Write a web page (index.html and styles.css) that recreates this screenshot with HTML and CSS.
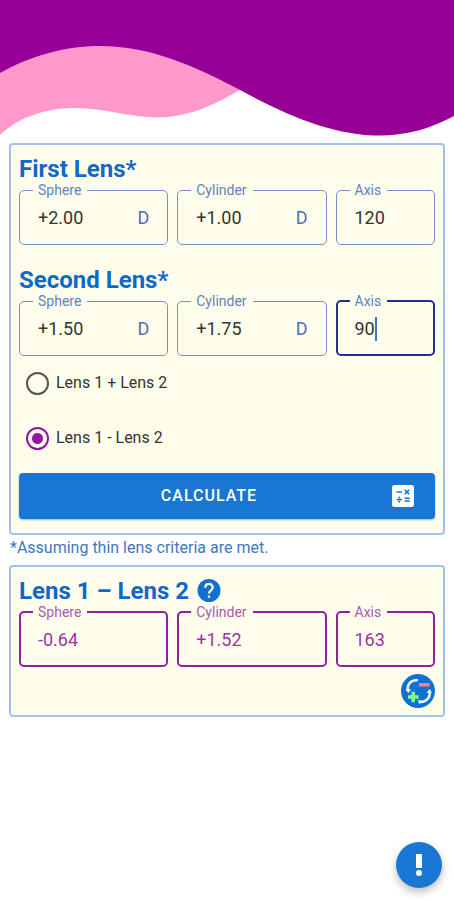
FILE: index.html
```html
<!DOCTYPE html>
<html lang="en">
<head>
<meta charset="utf-8">
<meta name="viewport" content="width=device-width, initial-scale=1">
<title>Lens Calculator</title>
<link rel="stylesheet" href="styles.css">
</head>
<body>
<header class="banner">
  <svg class="waves" viewBox="0 0 454 136" preserveAspectRatio="none" aria-hidden="true">
    <path fill="#ff99cb" d="M0 135C20 116 48 108 75 108C105 108 130 117.500 157 117.500C187 117.500 212 106 242 89L200 40H0Z"/>
    <path fill="#960096" d="M0 0H454V116C430 129 405 135.500 380 135.500C335 135.500 290 117 240 90C195 66 150 46 100 46C65 46 30 56 0 73Z"/>
  </svg>
</header>
<main class="page">
  <form class="card">
    <h2 class="title">First Lens*</h2>
    <div class="fields">
      <fieldset class="field">
        <legend><label for="s1">Sphere</label></legend>
        <div class="control"><input id="s1" type="text" value="+2.00"><span class="unit">D</span></div>
      </fieldset>
      <fieldset class="field">
        <legend><label for="c1">Cylinder</label></legend>
        <div class="control"><input id="c1" type="text" value="+1.00"><span class="unit">D</span></div>
      </fieldset>
      <fieldset class="field">
        <legend><label for="a1">Axis</label></legend>
        <div class="control"><input id="a1" type="text" value="120"></div>
      </fieldset>
    </div>
    <h2 class="title second">Second Lens*</h2>
    <div class="fields">
      <fieldset class="field">
        <legend><label for="s2">Sphere</label></legend>
        <div class="control"><input id="s2" type="text" value="+1.50"><span class="unit">D</span></div>
      </fieldset>
      <fieldset class="field">
        <legend><label for="c2">Cylinder</label></legend>
        <div class="control"><input id="c2" type="text" value="+1.75"><span class="unit">D</span></div>
      </fieldset>
      <fieldset class="field active">
        <legend><label for="a2">Axis</label></legend>
        <div class="control"><input class="short" id="a2" type="text" value="90"><span class="caret"></span></div>
      </fieldset>
    </div>
    <div class="options">
      <label class="option"><input type="radio" name="mode">Lens 1 + Lens 2</label>
      <label class="option"><input type="radio" name="mode" checked>Lens 1 - Lens 2</label>
    </div>
    <button class="calculate" type="button">
      <span class="calculate-text">CALCULATE</span>
      <svg width="22" height="22" viewBox="0 0 22 22" aria-hidden="true">
        <rect width="22" height="22" rx="2.500" fill="#fff"/>
        <g stroke="#1976d2" stroke-width="1.600" fill="none">
          <path d="M4.500 7H10M12.700 4.700L17.300 9.300M17.300 4.700L12.700 9.300M12.500 13.200H17.800M12.500 16H17.800"/>
          <path d="M4.500 14.600H10"/>
        </g>
        <circle cx="7.250" cy="12.500" r="1" fill="#1976d2"/>
        <circle cx="7.250" cy="16.700" r="1" fill="#1976d2"/>
      </svg>
    </button>
  </form>
  <p class="note">*Assuming thin lens criteria are met.</p>
  <section class="card results">
    <div class="heading">
      <h2 class="title">Lens 1 – Lens 2</h2>
      <button class="icon-button" type="button" aria-label="Help">
        <svg width="24" height="24" viewBox="0 0 24 24" aria-hidden="true">
          <circle cx="12" cy="11.500" r="11.500" fill="#1270d2"/>
          <path d="M8.300 8.800C8.300 3.700 15.700 3.700 15.700 8.500C15.700 11.200 12 11.500 12 14.500" fill="none" stroke="#fffeec" stroke-width="2.200"/>
          <rect x="10.900" y="16.500" width="2.200" height="2.300" fill="#fffeec"/>
        </svg>
      </button>
    </div>
    <div class="fields">
      <fieldset class="field">
        <legend><label for="s3">Sphere</label></legend>
        <div class="control"><input id="s3" type="text" value="-0.64" readonly></div>
      </fieldset>
      <fieldset class="field">
        <legend><label for="c3">Cylinder</label></legend>
        <div class="control"><input id="c3" type="text" value="+1.52" readonly></div>
      </fieldset>
      <fieldset class="field">
        <legend><label for="a3">Axis</label></legend>
        <div class="control"><input id="a3" type="text" value="163" readonly></div>
      </fieldset>
    </div>
    <button class="icon-button transpose" type="button" aria-label="Switch cylinder sign">
      <svg width="34" height="34" viewBox="0 0 34 34" aria-hidden="true">
        <circle cx="17" cy="17" r="17" fill="#1270d2"/>
        <g fill="none" stroke="#e8f6ff" stroke-width="2.600">
          <path d="M7 17.500C5.500 10.500 10 5.500 17 6.300"/>
          <path d="M28.500 16.500C30 23.500 25 28.800 18 27.700"/>
        </g>
        <path d="M4.500 15L7.500 19L10 15ZM25.500 19L28.500 15L31 19ZM17 25.500L21 28L18 30Z" fill="#e8f6ff"/>
        <path d="M18 10.800H28.500" stroke="#ee8088" stroke-width="3.600"/>
        <path d="M7 23H17.500M12.200 17.800V28.200" stroke="#7dff90" stroke-width="3.600"/>
      </svg>
    </button>
  </section>
</main>
<button class="fab" type="button" aria-label="Information">
  <svg width="8" height="22" viewBox="0 0 8 22" aria-hidden="true">
    <path d="M1 0H7V14H1Z" fill="#fff"/>
    <circle cx="4" cy="19" r="3" fill="#fff"/>
  </svg>
</button>
</body>
</html>
```
FILE: styles.css
```css
* {
  box-sizing: border-box;
}

body {
  margin: 0;
  background: #fff;
  color: #333;
  font-family: Roboto, "Liberation Sans", sans-serif;
}

.banner {
  height: 143px;
}

.waves {
  display: block;
  width: 100%;
  height: 136px;
}

.page {
  padding: 0 9px;
}

.card {
  padding: 12px 8px 14px;
  border: 2px solid #a3c2ea;
  border-radius: 4px;
  background: #fffeec;
}

.title {
  margin: 0;
  color: #1268c8;
  font-size: 24px;
  font-weight: 700;
  line-height: 24px;
}

.second {
  margin-top: 23px;
}

.fields {
  display: grid;
  grid-template-columns: 3fr 3fr 2fr;
  gap: 9px;
  margin-top: 1px;
}

.field {
  min-width: 0;
  height: 63px;
  margin: 0;
  padding: 0 18px 0 13px;
  border: 1px solid #7791c6;
  border-radius: 5px;
}

legend {
  padding: 0 6px 0 5px;
  color: #5f83bd;
  font-size: 14px;
  line-height: 16px;
}

.control {
  display: flex;
  align-items: center;
  height: 40px;
  padding-left: 5px;
}

.control input {
  flex: 1;
  width: 100%;
  min-width: 0;
  padding: 0;
  border: 0;
  outline: 0;
  background: none;
  color: #333;
  font: 18px/24px Roboto, "Liberation Sans", sans-serif;
}

.control .short {
  flex: none;
  width: 20px;
}

.caret {
  width: 2px;
  height: 24px;
  background: #4276c8;
}

.unit {
  color: #4c70b8;
  font-size: 18px;
  line-height: 24px;
}

.active {
  padding: 0 17px 0 12px;
  border: 2px solid #20309a;
}

.options {
  display: grid;
  gap: 31px;
  margin: 15px 0 23px 7px;
}

.option {
  display: flex;
  align-items: center;
  gap: 7px;
  font-size: 16px;
  line-height: 24px;
}

.option input {
  appearance: none;
  width: 23px;
  height: 23px;
  margin: 0;
  border: 2px solid #555;
  border-radius: 50%;
}

.option input:checked {
  border-color: #9414a4;
  background: radial-gradient(circle, #9414a4 0 5px, transparent 6px);
}

.calculate {
  display: flex;
  align-items: center;
  gap: 14px;
  width: 100%;
  height: 46px;
  padding: 0 21px;
  border: 0;
  border-radius: 4px;
  background: #1976d2;
  box-shadow: 0 1px 2px #1976d280;
  color: #fff;
  font: 500 16px/24px Roboto, "Liberation Sans", sans-serif;
  letter-spacing: 1px;
}

.calculate-text {
  flex: 1;
  text-align: center;
}

.note {
  margin: 3px 1px 7px;
  color: #3b78c6;
  font-size: 16px;
  line-height: 20px;
}

.results {
  padding-bottom: 7px;
}

.heading {
  display: flex;
  align-items: center;
  gap: 8px;
}

.icon-button {
  display: block;
  padding: 0;
  border: 0;
  background: none;
}

.icon-button svg {
  display: block;
}

.results .field {
  padding: 0 17px 0 12px;
  border: 2px solid #9020a0;
}

.results legend {
  color: #a85bb0;
}

.results .control input {
  color: #9a35a5;
}

.transpose {
  margin: 7px 0 0 auto;
}

.fab {
  position: fixed;
  right: 12px;
  bottom: 12px;
  display: grid;
  place-items: center;
  width: 46px;
  height: 46px;
  padding: 0;
  border: 0;
  border-radius: 50%;
  background: #1976d2;
  box-shadow: 0 4px 8px #0004;
}
```
